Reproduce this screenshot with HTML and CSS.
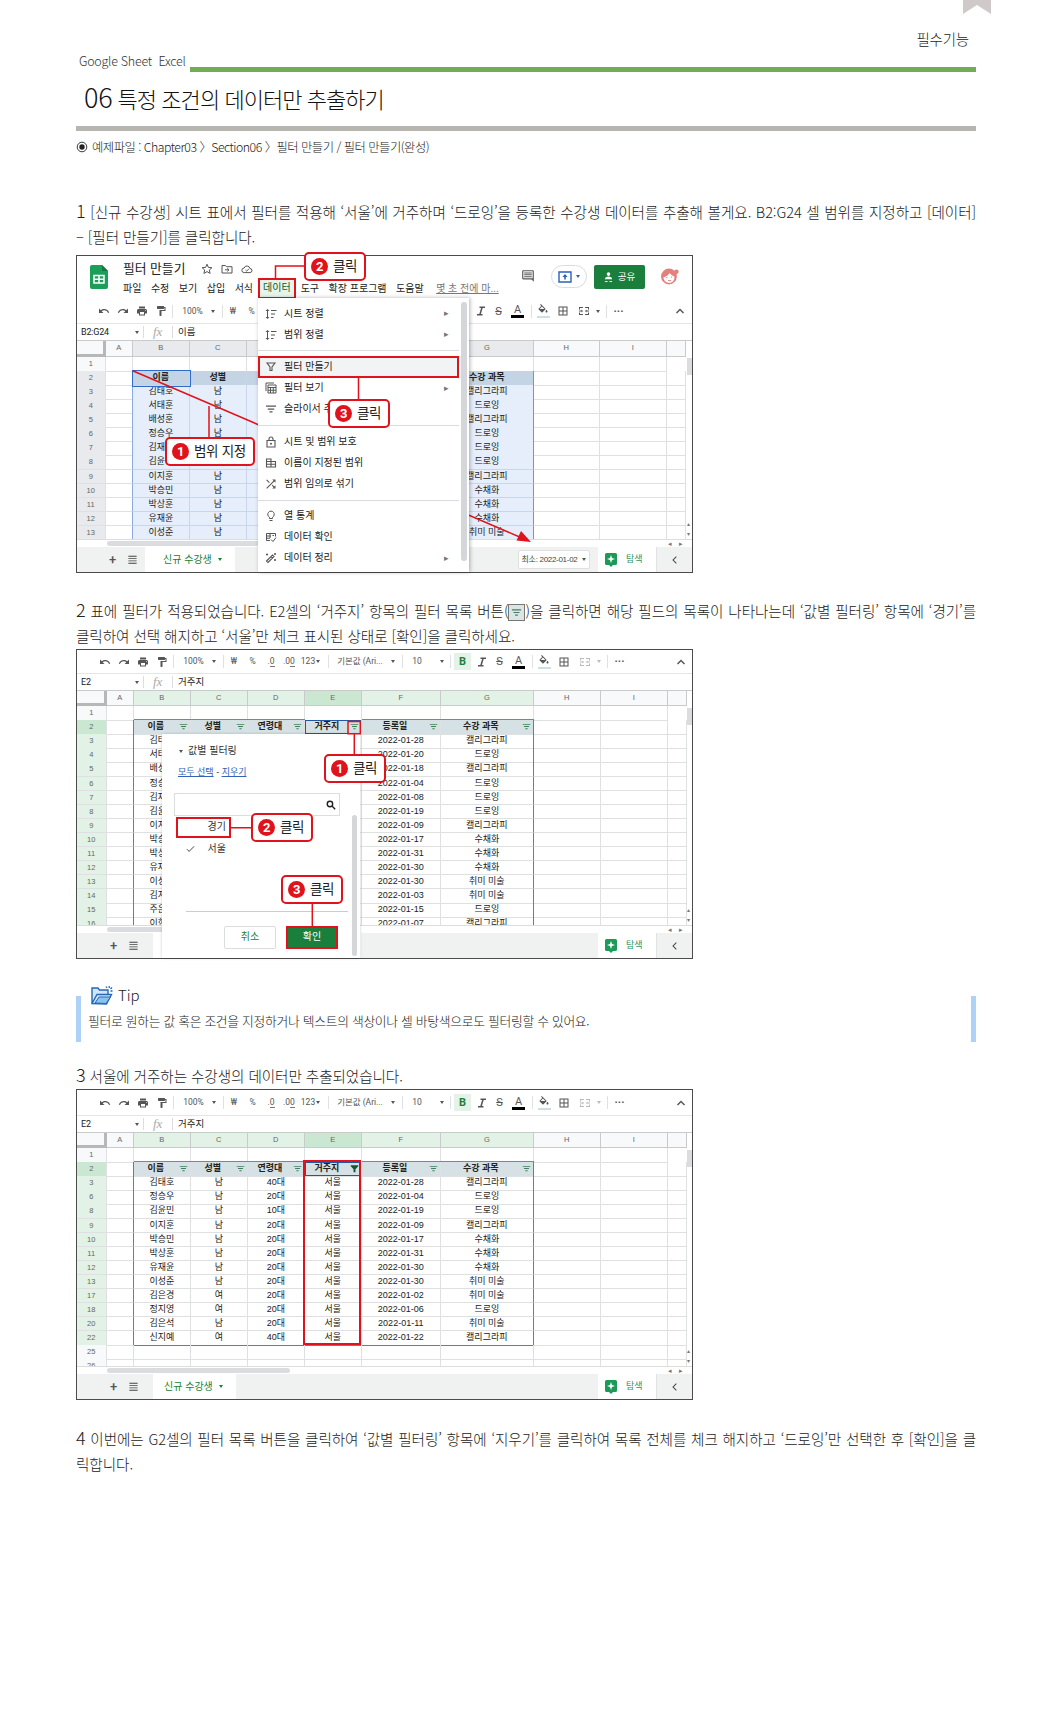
FILE: index.html
```html
<!DOCTYPE html>
<html lang="ko">
<head>
<meta charset="utf-8">
<title>06 특정 조건의 데이터만 추출하기</title>
<link rel="stylesheet" href="styles.css">
</head>
<body>
<svg class="sprite" aria-hidden="true">
  <symbol id="undo" viewBox="0 0 24 24"><path d="M12.5 8c-2.65 0-5.05.99-6.9 2.6L2 7v9h9l-3.62-3.62c1.39-1.16 3.16-1.88 5.12-1.88 3.54 0 6.55 2.31 7.6 5.5l2.37-.78C21.08 11.03 17.15 8 12.5 8z"/></symbol>
  <symbol id="redo" viewBox="0 0 24 24"><path d="M18.4 10.6C16.55 8.99 14.15 8 11.5 8c-4.65 0-8.58 3.03-9.96 7.22L3.9 16c1.05-3.19 4.05-5.5 7.6-5.5 1.95 0 3.73.72 5.12 1.88L13 16h9V7l-3.6 3.6z"/></symbol>
  <symbol id="print" viewBox="0 0 24 24"><path d="M19 8H5c-1.66 0-3 1.34-3 3v6h4v4h12v-4h4v-6c0-1.66-1.34-3-3-3zm-3 11H8v-5h8v5zm3-7c-.55 0-1-.45-1-1s.45-1 1-1 1 .45 1 1-.45 1-1 1zm-1-9H6v4h12V3z"/></symbol>
  <symbol id="paint" viewBox="0 0 24 24"><path d="M18 4V3c0-.55-.45-1-1-1H5c-.55 0-1 .45-1 1v4c0 .55.45 1 1 1h12c.55 0 1-.45 1-1V6h1v4H9v11c0 .55.45 1 1 1h2c.55 0 1-.45 1-1v-9h8V4h-3z"/></symbol>
  <symbol id="italic" viewBox="0 0 24 24"><path d="M9 3v3h3.2l-3.6 12H4v3h11v-3h-3.2l3.6-12H20V3z"/></symbol>
  <symbol id="fill" viewBox="0 0 24 24"><path d="M16.56 8.94L7.62 0 6.21 1.41l2.38 2.38-5.15 5.15c-.59.59-.59 1.54 0 2.12l5.5 5.5c.29.29.68.44 1.06.44s.77-.15 1.06-.44l5.5-5.5c.59-.58.59-1.53 0-2.12zM5.21 10L10 5.21 14.79 10H5.21zM19 11.5s-2 2.17-2 3.5c0 1.1.9 2 2 2s2-.9 2-2c0-1.33-2-3.5-2-3.5z"/></symbol>
  <symbol id="borders" viewBox="0 0 24 24"><path d="M3 3v18h18V3H3zm8 16H5v-6h6v6zm0-8H5V5h6v6zm8 8h-6v-6h6v6zm0-8h-6V5h6v6z"/></symbol>
  <symbol id="merge" viewBox="0 0 24 24"><path d="M2 4h8v2H4v3H2zM22 4h-8v2h6v3h2zM2 20h8v-2H4v-3H2zM22 20h-8v-2h6v-3h2zM2 11h5V9l3 3-3 3v-2H2zM22 11h-5V9l-3 3 3 3v-2h5z"/></symbol>
  <symbol id="up" viewBox="0 0 24 24"><path d="M12 7l-8 8 2 2 6-6 6 6 2-2z"/></symbol>
  <symbol id="left" viewBox="0 0 24 24"><path d="M15.4 6L14 4.600l-7.400 7.400 7.400 7.400 1.400-1.400-6-6z"/></symbol>
  <symbol id="list" viewBox="0 0 24 24"><path d="M3 4h18v2H3zM3 9h18v2H3zM3 14h18v2H3zM3 19h18v2H3z"/></symbol>
  <symbol id="filter" viewBox="0 0 24 24"><path d="M9 19h6v-2.500H9zM2 5v2.500h20V5zM5.500 13.300h13v-2.500h-13z"/></symbol>
  <symbol id="funnel" viewBox="0 0 24 24"><path d="M2 3h20v3l-7.500 8v8h-5v-8L2 6z"/></symbol>
  <symbol id="funnel-o" viewBox="0 0 24 24"><path fill="none" stroke="currentColor" stroke-width="2.200" d="M4 4h16l-6 8v7h-4v-7z"/></symbol>
  <symbol id="sort" viewBox="0 0 24 24"><path d="M5 2L1 6h3v12H1l4 4 4-4H6V6h3zM12 4h11v2H12zM12 11h8v2h-8zM12 18h5v2h-5z"/></symbol>
  <symbol id="views" viewBox="0 0 24 24"><path fill="none" stroke="currentColor" stroke-width="2" d="M2 18V2h16M6 6h16v16H6zM6 11h16M11 11v11M16.500 11v11M6 16.500h16"/></symbol>
  <symbol id="lock" viewBox="0 0 24 24"><path fill="none" stroke="currentColor" stroke-width="2.200" d="M4 9h16v13H4zM8 9V6a4 4 0 018 0v3"/><circle cx="12" cy="15.500" r="2"/></symbol>
  <symbol id="named" viewBox="0 0 24 24"><path fill="none" stroke="currentColor" stroke-width="2.200" d="M3 4h9v16H3zM12 9h9v11h-9zM3 9h9M3 14.500h18"/></symbol>
  <symbol id="shuffle" viewBox="0 0 24 24"><path d="M9.500 8.500L4 3 2.500 4.500 8 10zM14.500 3l2.500 2.500L2.500 20 4 21.500 18.500 7 21 9.500V3zM15 13.500L13.500 15l3.500 3.500-2.500 2.500H21v-6.500L18.500 17z"/></symbol>
  <symbol id="bulb" viewBox="0 0 24 24"><path fill="none" stroke="currentColor" stroke-width="2" d="M9 17v-2.500a6.500 6.500 0 116 0V17zM9 21h6"/></symbol>
  <symbol id="verify" viewBox="0 0 24 24"><path fill="none" stroke="currentColor" stroke-width="2" d="M10 19H3V5h18v6M3 10h9M3 14.500h7M10 5v9M12 17l4 4 6-8M15 9h3"/></symbol>
  <symbol id="wand" viewBox="0 0 24 24"><path fill="none" stroke="currentColor" stroke-width="2.200" d="M3 18L15 6l3 3L6 21zM12 9l3 3M4 3v4M2 5h4M20 14v4M18 16h4M20 2v4M18 4h4"/></symbol>
  <symbol id="search" viewBox="0 0 24 24"><path fill="none" stroke="currentColor" stroke-width="3.400" d="M15 15l7 7M16 9.500a6.500 6.500 0 11-13 0 6.500 6.500 0 0113 0z"/></symbol>
  <symbol id="comment" viewBox="0 0 24 24"><path d="M21.990 4c0-1.100-.89-2-1.990-2H4c-1.100 0-2 .9-2 2v12c0 1.100.9 2 2 2h14l4 4-.01-18zM20 16H4V4h16z"/><path d="M5.500 6h13v1.700h-13zM5.500 9.200h13v1.700h-13zM5.500 12.400h13v1.700h-13z"/></symbol>
  <symbol id="explore" viewBox="0 0 24 28"><path fill="#1e9a58" d="M3 0h18a3 3 0 013 3v18a3 3 0 01-3 3h-5l-4 4-4-4H3a3 3 0 01-3-3V3a3 3 0 013-3z"/><path fill="#fff" d="M12 4l2 6 6 2-6 2-2 6-2-6-6-2 6-2z"/></symbol>
</svg>

<main class="page">
  <header class="head">
    <svg class="bookmark" viewBox="0 0 28 14"><path fill="#cfc9ca" d="M0 0h28v14L14 5 0 14z"/></svg>
    <p class="category">필수기능</p>
    <div class="rule-row"><span class="products">Google Sheet&nbsp; Excel</span><span class="green-rule"></span></div>
    <h1><span>06</span> 특정 조건의 데이터만 추출하기</h1>
    <p class="example"><svg viewBox="0 0 12 12"><circle cx="6" cy="6" r="4.800" fill="none" stroke="#222" stroke-width=".9"/><circle cx="6" cy="6" r="2.700"/></svg><span>예제파일 : Chapter03 〉Section06 〉필터 만들기 / 필터 만들기(완성)</span></p>
  </header>

  <p class="step first"><span class="line full"><b>1</b> [신규 수강생] 시트 표에서 필터를 적용해 ‘서울’에 거주하며 ‘드로잉’을 등록한 수강생 데이터를 추출해 볼게요. B2:G24 셀 범위를 지정하고 [데이터]</span><span class="line">– [필터 만들기]를 클릭합니다.</span></p>

  <section class="shot shot1">
    <div class="app-head">
      <svg class="logo" viewBox="0 0 18 24"><path fill="#1b9e58" d="M2 0h10l6 6v16a2 2 0 01-2 2H2a2 2 0 01-2-2V2a2 2 0 012-2z"/><path fill="#137a43" d="M12 0l6 6h-6z"/><path fill="none" stroke="#fff" stroke-width="1.500" d="M4 10.500h10v7.500H4zM9 10.500V18M4 14.200h10"/></svg>
      <div class="titles">
        <div class="doc"><span>필터 만들기</span>
          <svg viewBox="0 0 12 12"><path class="ln" d="M6 1.200l1.400 3.200 3.500.3-2.600 2.300.8 3.400L6 8.600l-3.100 1.800.8-3.400L1.100 4.700l3.500-.3z"/></svg>
          <svg viewBox="0 0 12 12"><path class="ln" d="M1 2.500h3.500l1 1.200H11V10H1zM4 6.800h4M6.300 5.200L8 6.800 6.300 8.400"/></svg>
          <svg viewBox="0 0 12 12"><path class="ln" d="M3.200 9.600a2.300 2.300 0 01-.1-4.600 3 3 0 015.800.5 2 2 0 010 4.100zM4.500 7l1.200 1.100L7.800 6"/></svg></div>
        <nav class="menubar"><span>파일</span><span>수정</span><span>보기</span><span>삽입</span><span>서식</span><span class="hot">데이터</span><span>도구</span><span>확장 프로그램</span><span>도움말</span><u>몇 초 전에 마...</u></nav>
      </div>
      <svg class="comment"><use href="#comment"/></svg>
      <span class="present"><svg viewBox="0 0 14 12"><path fill="none" stroke="#2a62b8" stroke-width="1.400" d="M1 1h12v10H1z"/><path fill="#2a62b8" d="M7 3l2.600 3H7.800v2.500H6.200V6H4.400z"/></svg><i class="caret"></i></span>
      <span class="share"><svg viewBox="0 0 10 12"><circle cx="5" cy="2.200" r="2" fill="#fff"/><path fill="#fff" d="M1 8c0-4 8-4 8 0z"/><path fill="none" stroke="#fff" d="M1 10.500h3M6 10.500h3"/></svg>공유</span>
      <svg class="avatar" viewBox="0 0 18 18"><circle cx="8.500" cy="9" r="7.500" fill="#e58080"/><circle cx="15.500" cy="4.500" r="2.200" fill="#e58080"/><path fill="#fff" stroke="#d66" stroke-width=".6" d="M2.800 9.500c3-.5 5-2 6.500-4.500.8 2 2.500 3 4.800 3.800C14.500 17.500 3.500 17.500 2.800 9.500z"/><path fill="none" stroke="#c55" stroke-width=".8" d="M6.500 9.500v1M11 9v1M7.500 12.500c1 .8 2 .6 3 0"/></svg>
    </div>
    <div class="toolbar">
      <svg><use href="#undo"/></svg><svg><use href="#redo"/></svg><svg><use href="#print"/></svg><svg><use href="#paint"/></svg><i class="sep"></i><span>100%</span><i class="caret"></i><i class="sep"></i><span>₩</span><span>%</span><span class="dec">.0</span><span class="dec">.00</span><span>123</span><i class="caret"></i><i class="sep"></i><span>기본값 (Ari...</span><i class="caret"></i><i class="sep"></i><span class="size">10</span><i class="caret"></i><i class="sep"></i><span class="bold">B</span><svg><use href="#italic"/></svg><s>S</s><span class="color">A</span><i class="sep"></i><span class="bucket"><svg><use href="#fill"/></svg></span><svg><use href="#borders"/></svg><svg><use href="#merge"/></svg><i class="caret"></i><i class="sep"></i><b>···</b><svg class="end"><use href="#up"/></svg>
    </div>
    <div class="formula"><span class="ref">B2:G24</span><i class="caret"></i><em>fx</em><span>이름</span></div>
    <div class="view">
      <table class="sheet">
        <thead><tr><th><th>A<th>B<th>C<th>D<th>E<th>F<th>G<th>H<th>I<th>
        <tbody>
        <tr><th>1<td><td><td><td><td><td><td><td><td>
        <tr class="hd"><th>2<td><td class="cur">이름<td>성별<td>연령대<td>거주지<td>등록일<td>수강 과목<td><td><td>
        <tr><th>3<td><td>김태호<td>남<td>40대<td>서울<td>2022-01-28<td>캘리그라피<td><td><td>
        <tr><th>4<td><td>서태훈<td>남<td><td><td>2022-01-20<td>드로잉<td><td><td>
        <tr><th>5<td><td>배성훈<td>남<td><td><td>2022-01-18<td>캘리그라피<td><td><td>
        <tr><th>6<td><td>정승우<td>남<td>20대<td>서울<td>2022-01-04<td>드로잉<td><td><td>
        <tr><th>7<td><td>김재훈<td><td><td><td>2022-01-08<td>드로잉<td><td><td>
        <tr><th>8<td><td>김윤민<td>남<td>10대<td>서울<td>2022-01-19<td>드로잉<td><td><td>
        <tr><th>9<td><td>이지훈<td>남<td>20대<td>서울<td>2022-01-09<td>캘리그라피<td><td><td>
        <tr><th>10<td><td>박승민<td>남<td>20대<td>서울<td>2022-01-17<td>수채화<td><td><td>
        <tr><th>11<td><td>박상훈<td>남<td>20대<td>서울<td>2022-01-31<td>수채화<td><td><td>
        <tr><th>12<td><td>유재윤<td>남<td>20대<td>서울<td>2022-01-30<td>수채화<td><td><td>
        <tr><th>13<td><td>이성준<td>남<td>20대<td>서울<td>2022-01-30<td>취미 미술<td><td><td>
      </table>
      <i class="vthumb"></i><span class="varrows">▴<br>▾</span>
    </div>
    <div class="hscroll"><i></i><span>◂</span><span>▸</span></div>
    <footer class="tabs"><b class="plus">+</b><svg><use href="#list"/></svg><span class="tab">신규 수강생<i class="caret"></i></span><span class="min">최소: 2022-01-02<i class="caret"></i></span><span class="explore"><svg><use href="#explore"/></svg>탐색</span><svg class="back"><use href="#left"/></svg></footer>

    <svg class="marks" viewBox="0 0 617 318"><path d="M56.700 115.700L446 283M133 151v33"/><path class="tip-head" d="M455 287l-14.500-1.500 4.500-9.500z"/></svg>
    <div class="menu">
      <p><svg><use href="#sort"/></svg>시트 정렬<i>▸</i></p>
      <p><svg><use href="#sort"/></svg>범위 정렬<i>▸</i></p>
      <hr>
      <p class="picked"><svg><use href="#funnel-o"/></svg>필터 만들기</p>
      <p><svg><use href="#views"/></svg>필터 보기<i>▸</i></p>
      <p><svg><use href="#filter"/></svg>슬라이서 추가</p>
      <hr>
      <p><svg><use href="#lock"/></svg>시트 및 범위 보호</p>
      <p><svg><use href="#named"/></svg>이름이 지정된 범위</p>
      <p><svg><use href="#shuffle"/></svg>범위 임의로 섞기</p>
      <hr>
      <p><svg><use href="#bulb"/></svg>열 통계</p>
      <p><svg><use href="#verify"/></svg>데이터 확인</p>
      <p><svg><use href="#wand"/></svg>데이터 정리<i>▸</i></p>
      <span class="menu-thumb"></span>
    </div>
    <svg class="marks" viewBox="0 0 617 318"><path d="M228 11h-28.500v12.500M282.500 122v22"/></svg>
    <span class="callout s1a"><b>1</b>범위 지정</span>
    <span class="callout s1b"><b>2</b>클릭</span>
    <span class="callout s1c"><b>3</b>클릭</span>
  </section>

  <p class="step second"><span class="line full"><b>2</b> 표에 필터가 적용되었습니다. E2셀의 ‘거주지’ 항목의 필터 목록 버튼(<i class="chip"><svg><use href="#filter"/></svg></i>)을 클릭하면 해당 필드의 목록이 나타나는데 ‘값별 필터링’ 항목에 ‘경기’를</span><span class="line">클릭하여 선택 해지하고 ‘서울’만 체크 표시된 상태로 [확인]을 클릭하세요.</span></p>

  <section class="shot shot2 green">
    <div class="toolbar">
      <svg><use href="#undo"/></svg><svg><use href="#redo"/></svg><svg><use href="#print"/></svg><svg><use href="#paint"/></svg><i class="sep"></i><span>100%</span><i class="caret"></i><i class="sep"></i><span>₩</span><span>%</span><span class="dec">.0</span><span class="dec">.00</span><span>123</span><i class="caret"></i><i class="sep"></i><span>기본값 (Ari...</span><i class="caret"></i><i class="sep"></i><span class="size">10</span><i class="caret"></i><i class="sep"></i><span class="bold">B</span><svg><use href="#italic"/></svg><s>S</s><span class="color">A</span><i class="sep"></i><span class="bucket"><svg><use href="#fill"/></svg></span><svg><use href="#borders"/></svg><svg class="off"><use href="#merge"/></svg><i class="caret off"></i><i class="sep"></i><b>···</b><svg class="end"><use href="#up"/></svg>
    </div>
    <div class="formula"><span class="ref">E2</span><i class="caret"></i><em>fx</em><span>거주지</span></div>
    <div class="view">
      <table class="sheet">
        <thead><tr><th><th>A<th>B<th>C<th>D<th class="on">E<th>F<th>G<th>H<th>I<th>
        <tbody>
        <tr><th>1<td><td><td><td><td><td><td><td><td>
        <tr class="hd"><th class="on">2<td><td>이름<svg><use href="#filter"/></svg><td>성별<svg><use href="#filter"/></svg><td>연령대<svg><use href="#filter"/></svg><td class="cur">거주지<svg><use href="#filter"/></svg><td>등록일<svg><use href="#filter"/></svg><td>수강 과목<svg><use href="#filter"/></svg><td><td><td>
        <tr><th>3<td><td>김태호<td>남<td>40대<td>서울<td>2022-01-28<td>캘리그라피<td><td><td>
        <tr><th>4<td><td>서태훈<td>남<td><td><td>2022-01-20<td>드로잉<td><td><td>
        <tr><th>5<td><td>배성훈<td>남<td><td><td>2022-01-18<td>캘리그라피<td><td><td>
        <tr><th>6<td><td>정승우<td>남<td>20대<td>서울<td>2022-01-04<td>드로잉<td><td><td>
        <tr><th>7<td><td>김재훈<td>남<td><td><td>2022-01-08<td>드로잉<td><td><td>
        <tr><th>8<td><td>김윤민<td>남<td>10대<td>서울<td>2022-01-19<td>드로잉<td><td><td>
        <tr><th>9<td><td>이지훈<td>남<td>20대<td>서울<td>2022-01-09<td>캘리그라피<td><td><td>
        <tr><th>10<td><td>박승민<td>남<td>20대<td>서울<td>2022-01-17<td>수채화<td><td><td>
        <tr><th>11<td><td>박상훈<td>남<td>20대<td>서울<td>2022-01-31<td>수채화<td><td><td>
        <tr><th>12<td><td>유재윤<td>남<td>20대<td>서울<td>2022-01-30<td>수채화<td><td><td>
        <tr><th>13<td><td>이성준<td>남<td>20대<td>서울<td>2022-01-30<td>취미 미술<td><td><td>
        <tr><th>14<td><td>김지훈<td><td><td><td>2022-01-03<td>취미 미술<td><td><td>
        <tr><th>15<td><td>주은영<td><td><td><td>2022-01-15<td>드로잉<td><td><td>
        <tr><th>16<td><td>이현주<td><td><td><td>2022-01-07<td>캘리그라피<td><td><td>
      </table>
      <i class="vthumb"></i><span class="varrows">▴<br>▾</span>
    </div>
    <div class="hscroll"><i></i><span>◂</span><span>▸</span></div>
    <footer class="tabs"><b class="plus">+</b><svg><use href="#list"/></svg><span class="tab wide"></span><span class="explore"><svg><use href="#explore"/></svg>탐색</span><svg class="back"><use href="#left"/></svg></footer>

    <div class="dialog">
      <p class="by-value"><i class="caret"></i>값별 필터링</p>
      <p class="links"><u>모두 선택</u> - <u>지우기</u></p>
      <div class="find"><svg><use href="#search"/></svg></div>
      <p class="option marked">경기</p>
      <p class="option"><svg viewBox="0 0 10 8"><path class="ln" d="M1 4.200l2.500 2.500L9 1"/></svg>서울</p>
      <div class="actions"><span class="cancel">취소</span><span class="ok">확인</span></div>
      <i class="dialog-thumb"></i>
    </div>
    <svg class="marks" viewBox="0 0 617 310"><path d="M272 72.500h12.300v12.300H272zM278.300 85v21M155 178.700h21M236.300 254v23"/></svg>
    <span class="callout s2a"><b>1</b>클릭</span>
    <span class="callout s2b"><b>2</b>클릭</span>
    <span class="callout s2c"><b>3</b>클릭</span>
  </section>

  <aside class="tip">
    <h2><svg viewBox="0 0 22 19"><path fill="#cfe6fb" stroke="#2668b4" stroke-width="1.400" d="M1 17V2h6l1.500 2H17v4M1 17.500L6 8.500h14.500L15.500 18z"/><path fill="#8cc2f2" stroke="#2668b4" stroke-width="1" d="M4 17l4-6h11.500L15 17.500z"/><path fill="none" stroke="#2668b4" stroke-width="1.300" d="M15 .5l1 1.500M18 0l.5 2M21 1.500L19.500 3M21.500 5h-2"/></svg>Tip</h2>
    <p>필터로 원하는 값 혹은 조건을 지정하거나 텍스트의 색상이나 셀 바탕색으로도 필터링할 수 있어요.</p>
  </aside>

  <p class="step third"><span class="line"><b>3</b> 서울에 거주하는 수강생의 데이터만 추출되었습니다.</span></p>

  <section class="shot shot3 green">
    <div class="toolbar">
      <svg><use href="#undo"/></svg><svg><use href="#redo"/></svg><svg><use href="#print"/></svg><svg><use href="#paint"/></svg><i class="sep"></i><span>100%</span><i class="caret"></i><i class="sep"></i><span>₩</span><span>%</span><span class="dec">.0</span><span class="dec">.00</span><span>123</span><i class="caret"></i><i class="sep"></i><span>기본값 (Ari...</span><i class="caret"></i><i class="sep"></i><span class="size">10</span><i class="caret"></i><i class="sep"></i><span class="bold">B</span><svg><use href="#italic"/></svg><s>S</s><span class="color">A</span><i class="sep"></i><span class="bucket"><svg><use href="#fill"/></svg></span><svg><use href="#borders"/></svg><svg class="off"><use href="#merge"/></svg><i class="caret off"></i><i class="sep"></i><b>···</b><svg class="end"><use href="#up"/></svg>
    </div>
    <div class="formula"><span class="ref">E2</span><i class="caret"></i><em>fx</em><span>거주지</span></div>
    <div class="view">
      <table class="sheet">
        <thead><tr><th><th>A<th>B<th>C<th>D<th class="on">E<th>F<th>G<th>H<th>I<th>
        <tbody>
        <tr><th>1<td><td><td><td><td><td><td><td><td>
        <tr class="hd"><th class="on">2<td><td>이름<svg><use href="#filter"/></svg><td>성별<svg><use href="#filter"/></svg><td>연령대<svg><use href="#filter"/></svg><td class="cur">거주지<svg><use href="#funnel"/></svg><td>등록일<svg><use href="#filter"/></svg><td>수강 과목<svg><use href="#filter"/></svg><td><td><td>
        <tr><th>3<td><td>김태호<td>남<td>40대<td>서울<td>2022-01-28<td>캘리그라피<td><td><td>
        <tr><th>6<td><td>정승우<td>남<td>20대<td>서울<td>2022-01-04<td>드로잉<td><td><td>
        <tr><th>8<td><td>김윤민<td>남<td>10대<td>서울<td>2022-01-19<td>드로잉<td><td><td>
        <tr><th>9<td><td>이지훈<td>남<td>20대<td>서울<td>2022-01-09<td>캘리그라피<td><td><td>
        <tr><th>10<td><td>박승민<td>남<td>20대<td>서울<td>2022-01-17<td>수채화<td><td><td>
        <tr><th>11<td><td>박상훈<td>남<td>20대<td>서울<td>2022-01-31<td>수채화<td><td><td>
        <tr><th>12<td><td>유재윤<td>남<td>20대<td>서울<td>2022-01-30<td>수채화<td><td><td>
        <tr><th>13<td><td>이성준<td>남<td>20대<td>서울<td>2022-01-30<td>취미 미술<td><td><td>
        <tr><th>17<td><td>김은경<td>여<td>20대<td>서울<td>2022-01-02<td>취미 미술<td><td><td>
        <tr><th>18<td><td>정지영<td>여<td>20대<td>서울<td>2022-01-06<td>드로잉<td><td><td>
        <tr><th>20<td><td>김은석<td>남<td>20대<td>서울<td>2022-01-11<td>취미 미술<td><td><td>
        <tr class="last"><th>22<td><td>신지예<td>여<td>40대<td>서울<td>2022-01-22<td>캘리그라피<td><td><td>
        <tr class="out"><th>25<td><td><td><td><td><td><td><td><td><td>
        <tr class="out"><th>26<td><td><td><td><td><td><td><td><td><td>
      </table>
      <i class="vthumb"></i><span class="varrows">▴<br>▾</span>
    </div>
    <div class="hscroll"><i></i><span>◂</span><span>▸</span></div>
    <footer class="tabs"><b class="plus">+</b><svg><use href="#list"/></svg><span class="tab">신규 수강생<i class="caret"></i></span><span class="explore"><svg><use href="#explore"/></svg>탐색</span><svg class="back"><use href="#left"/></svg></footer>
    <span class="frame"></span>
  </section>

  <p class="step fourth"><span class="line full"><b>4</b> 이번에는 G2셀의 필터 목록 버튼을 클릭하여 ‘값별 필터링’ 항목에 ‘지우기’를 클릭하여 목록 전체를 체크 해지하고 ‘드로잉’만 선택한 후 [확인]을 클</span><span class="line">릭합니다.</span></p>
</main>
</body>
</html>
```

FILE: styles.css
```css
* { box-sizing: border-box; }
body {
  margin: 0;
  background: #fff;
  color: #222;
  font-family: "Noto Sans CJK KR", sans-serif;
  font-weight: 300;
}
p, h1, h2 { margin: 0; font-weight: inherit; }
svg { display: block; fill: currentColor; flex: none; }
i { font-style: normal; }
.sprite { position: absolute; width: 0; height: 0; }
.ln { fill: none; stroke: currentColor; stroke-width: 1; }
.page { position: relative; width: 900px; height: 1710px; margin-left: 76px; }

/* page heading */
.bookmark { position: absolute; left: 887px; top: 0; width: 28px; height: 14px; }
.category { height: 52px; padding: 28px 7px 0 0; text-align: right; font-size: 14.5px; line-height: 21px; letter-spacing: -.2px; }
.rule-row { display: flex; justify-content: space-between; align-items: flex-end; height: 20px; }
.products { padding-left: 3px; font-size: 12.500px; line-height: 22px; letter-spacing: -.25px; color: #333; white-space: nowrap; }
.green-rule { width: 786px; height: 5px; background: #73ad53; }
h1 { height: 59px; padding: 5px 0 0 8px; border-bottom: 5px solid #b7b6ae; font-size: 22px; line-height: 39px; letter-spacing: -.95px; color: #111; white-space: nowrap; }
h1 span { font-size: 27px; letter-spacing: -.3px; }
.example { display: flex; align-items: center; gap: 4px; height: 31px; margin-bottom: 2px; font-size: 12.300px; letter-spacing: -.5px; white-space: nowrap; }
.example svg { width: 12px; height: 12px; }

/* steps */
.step { font-size: 14.600px; line-height: 25px; letter-spacing: -.08px; white-space: nowrap; }
.step b { font-size: 18px; font-weight: 300; line-height: 20px; }
.line { display: block; height: 25px; }
.full { text-align: justify; text-align-last: justify; }
.first { padding-top: 35px; height: 91px; }
.second { padding-top: 25px; height: 76px; }
.third { height: 26px; }
.fourth { padding-top: 26px; }
.chip { display: inline-block; width: 17px; height: 17px; padding: 2px; border: 1px solid #777; background: #dbe6e4; color: #4a7a66; vertical-align: -4px; }
.chip svg { width: 11px; height: 11px; }

/* captured spreadsheets */
.shot {
  position: relative; display: flex; flex-direction: column;
  width: 617px; border: 1px solid #4c4a4b; background: #fff;
  font: 9px/1 "Liberation Sans", "Noto Sans CJK KR", sans-serif; color: #222;
  --row: 14.070px;
}
.shot1 { height: 318px; }
.shot2 { height: 310px; }
.shot3 { height: 311px; }
.caret { width: 0; height: 0; border: 2.500px solid transparent; border-top: 3px solid #555; border-bottom: 0; }

.app-head { position: relative; display: flex; align-items: flex-start; height: 43px; padding: 9px 12px 0 13px; }
.logo { width: 18px; height: 24px; margin-right: 15px; }
.titles { width: 402px; margin-top: -5px; }
.doc { display: flex; align-items: center; gap: 8px; height: 18px; font-size: 12.800px; white-space: nowrap; }
.doc span { margin-right: 8px; }
.doc svg { width: 12px; height: 12px; color: #555; }
.menubar { display: flex; align-items: center; gap: 9.500px; height: 21px; font-size: 10px; white-space: nowrap; }
.menubar .hot { margin: 0 -5px; padding: 3px 3.500px 4px; border: 2px solid #e0121b; background: #e6f4ea; color: #14562d; }
.menubar u { margin-left: 3px; color: #777; }
.comment { width: 14px; height: 14px; margin: 4px 16px 0 -4px; color: #555; }
.present { display: flex; align-items: center; justify-content: center; gap: 4px; width: 36px; height: 23px; margin-right: 8px; border: 1px solid #dadce0; border-radius: 12px; }
.present svg { width: 14px; height: 12px; }
.present .caret { border-top-color: #2a62b8; }
.share { display: flex; align-items: center; justify-content: center; gap: 5px; width: 51px; height: 24px; margin: 0 15px 0 -1px; border-radius: 2px; background: #1a7f3c; color: #fff; font-size: 9.500px; }
.share svg { width: 9px; height: 11px; }
.avatar { width: 19px; height: 19px; margin-top: 2px; }

.toolbar {
  display: grid; flex: none; align-items: center; justify-items: center; height: 25px;
  grid-template-columns: 18px 19px 19px 19px 5px 35px 6px 12px 10px 27px 10px 26px 12px 7px 14px 50px 16px 3px 32px 12px 4px 21px 17px 19px 19px 8px 16px 24px 17px 11px 7px 17px 63px;
  padding-left: 19px; border-bottom: 1px solid #e3e5e8;
  font-size: 8.500px; color: #555; white-space: nowrap; font-family: Roboto, "Noto Sans CJK KR", sans-serif; font-weight: 400;
}
.toolbar svg { width: 12px; height: 12px; }
.toolbar .sep { width: 1px; height: 13px; background: #dfe1e4; }
.toolbar .size { padding-right: 6px; }
.toolbar .dec { padding-bottom: 1px; background: linear-gradient(#777, #777) right bottom / 5px 1px no-repeat; line-height: 9px; }
.toolbar .bold { width: 17px; height: 17px; background: #e4f2e7; color: #188038; font: bold 11px/17px Roboto, sans-serif; text-align: center; }
.toolbar s { font-size: 11px; }
.toolbar .color { width: 13px; border-bottom: 3px solid #000; font-size: 11px; text-align: center; }
.toolbar .bucket { width: 13px; border-bottom: 2px solid #d0dde4; }
.toolbar b { font-size: 11px; }
.toolbar .end { justify-self: end; width: 12px; margin-right: 4px; }
.toolbar .off { opacity: .4; }
.shot1 .toolbar .bold { background: none; }

.formula { display: flex; align-items: center; flex: none; height: 16px; padding-left: 4px; font-size: 9.500px; }
.formula .ref { width: 54px; font-size: 9px; font-family: Roboto, sans-serif; font-weight: 400; letter-spacing: -.2px; }
.formula em { width: 30px; margin: 0 5px 0 4px; padding-left: 9px; border-left: 1px solid #ddd; border-right: 1px solid #ddd; color: #aaa; font: italic 13px/12px "Liberation Serif", serif; }

.view { position: relative; flex: 1; min-height: 0; overflow: hidden; isolation: isolate; border-top: 1px solid #c8cacc; border-bottom: 1px solid #ddd; }
.sheet, .sheet thead, .sheet tbody { display: block; }
.sheet tr { display: grid; grid-template-columns: 29.500px 27.300px 57px 57px 57px 57px 79px 93px 67px 67px 19px; height: var(--row); }
.sheet thead tr { height: 15.200px; }
.sheet th, .sheet td { position: relative; padding: 0; border-right: 1px solid #dfe0e1; border-bottom: 1px solid #dfe0e1; line-height: 13.500px; text-align: center; white-space: nowrap; font-weight: 400; }
.sheet th { background: #f8f9fa; color: #666; font-size: 7.500px; }
.sheet thead th { line-height: 14px; border-color: #c8cacc; }
.sheet thead th:first-child { border-right: 3px solid #b7b7b7; border-bottom: 3px solid #b7b7b7; }
.sheet .hd td { font-weight: 700; }
.sheet .hd svg { position: absolute; right: 2px; top: 2px; width: 9px; height: 9px; color: #3e7f57; }
.vthumb { position: absolute; right: 0; top: 17px; width: 5px; height: 17px; background: #dadce0; }
.varrows { position: absolute; right: 0; bottom: 0; width: 5px; font-size: 6px; line-height: 10px; color: #777; }

/* blue selection of the first capture */
.shot1 .sheet tr { grid-template-columns: 28.500px 27.300px 57px 57px 57px 57px 80px 93px 66px 67px 19.500px; }
.shot1 .sheet thead tr { height: 16px; }
.shot1 thead th:nth-child(n+3):nth-child(-n+8), .shot1 tbody tr:nth-child(n+2) th { background: #e8eaed; }
.shot1 tbody tr:nth-child(n+2) td:nth-child(n+3):nth-child(-n+8) { background: #e6eefb; border-color: #c9d6ea; }
.shot1 tbody tr.hd:nth-child(n+2) td:nth-child(n+3):nth-child(-n+8) { background: #c3d4e4; }
.shot1 tbody tr:nth-child(n+2) td:nth-child(8):nth-child(-n+8) { border-right-color: #6d97dd; }
.shot1 tbody tr:nth-child(n+2) td:nth-child(2) { border-right-color: #8aaae0; }
.shot1 .cur { box-shadow: 0 0 0 1px #2f6bc8; z-index: 1; }

/* filtered ranges */
.green thead th:nth-child(n+3):nth-child(-n+8), .green tbody tr:nth-child(n+2) th { background: #e3f2e7; }
.green thead th.on:nth-child(6), .green tbody tr.hd th.on { background: #cae7d2; }
.green .hd td:nth-child(n+3):nth-child(-n+8) { background: #d5e1e4; box-shadow: 0 -1px #5b9c70; padding-right: 12px; }
.green tbody tr:nth-child(n+2) td:nth-child(2), .green tbody tr:nth-child(n+2) td:nth-child(8) { border-right: 1px solid #4f9463; }
.green .last td:nth-child(n+3):nth-child(-n+8) { border-bottom: 1px solid #4f9463; }
.green tbody tr.out th:first-child { background: #f8f9fa; }
.green tbody tr.out:nth-child(n+2) td:nth-child(n) { border-right-color: #dfe0e1; }
.green .hd td.cur:nth-child(6) { box-shadow: inset 0 0 0 1px #2456a8; }
.shot3 .hd td.cur svg { color: #14562d; }

.hscroll { display: flex; align-items: center; flex: none; gap: 5px; height: 7px; padding-left: 30px; padding-right: 8px; color: #777; font-size: 7px; }
.hscroll i { width: 183px; height: 5px; margin-right: auto; border-radius: 3px; background: #dadce0; }
.hscroll span { width: 6px; text-align: center; }
.tabs { display: flex; align-items: center; flex: none; height: 25px; padding-left: 33px; background: #f0f1f1; font-size: 10px; color: #444; }
.tabs .plus { width: 8px; margin-right: 10px; font: 500 13px/1 Roboto, sans-serif; color: #555; }
.tabs svg { width: 11px; height: 11px; }
.tabs .tab { display: flex; align-items: center; gap: 6px; width: 83px; height: 25px; margin-left: 14px; padding-left: 11px; background: #fff; color: #188038; }
.tabs .tab .caret { border-top-color: #188038; }
.tabs .wide { width: 208px; }
.tabs .explore { display: flex; align-items: center; gap: 9px; width: 59px; height: 25px; margin-left: auto; padding-left: 7px; border-right: 1px solid #e2e2e2; background: #fff; color: #2f9560; font-size: 9px; }
.tabs .explore svg { width: 12px; height: 14px; }
.tabs .back { width: 12px; height: 12px; margin: 0 11px 0 12px; }
.shot1 .tabs .tab { width: 90px; margin-left: 7px; padding-left: 18px; }
.shot1 .tabs .plus { margin-left: -1px; }
.shot1 .min { display: flex; align-items: center; justify-content: center; gap: 5px; width: 72px; height: 19px; margin-left: auto; border: 1px solid #e0e0e0; border-radius: 2px; background: #fff; font-size: 8px; letter-spacing: -.3px; white-space: nowrap; }
.shot1 .min + .explore { margin-left: 8px; }
.shot2 .toolbar { height: 24px; }
.shot3 .toolbar { height: 26px; }
.shot1 .toolbar { padding-left: 18px; }

/* data menu */
.menu { position: absolute; left: 181px; top: 42px; width: 211px; height: 274px; padding: 5px 10px 0 0; background: #fff; box-shadow: 1px 0 4px rgba(0,0,0,.3); overflow: hidden; }
.menu p { display: flex; align-items: center; height: 21.200px; padding: 0 10px 0 7px; gap: 7px; font-size: 10px; white-space: nowrap; }
.menu svg { width: 12px; height: 12px; color: #555; }
.menu i { margin-left: auto; color: #777; font-size: 9px; }
.menu hr { height: 1px; margin: 5px 0; border: 0; background: #d9dce3; }
.menu .picked { border: 2px solid #e0121b; background: #f1f3f4; padding-left: 5px; }
.menu-thumb { position: absolute; right: 2px; top: 4px; width: 6px; height: 259px; border-radius: 3px; background: #d4d6da; }

/* filter dialog */
.dialog { position: absolute; left: 85px; top: 84px; width: 198px; height: 224px; padding: 8px 20px 0 12px; background: #fff; box-shadow: 0 0 3px rgba(0,0,0,.2); font-size: 10px; color: #333; }
.by-value { display: flex; align-items: center; gap: 5px; height: 18px; padding-left: 5px; }
.links { height: 24px; padding-left: 4px; font-size: 9px; line-height: 24px; }
.links u { color: #3460b5; }
.find { display: flex; align-items: center; justify-content: flex-end; height: 23px; margin-top: 9px; padding-right: 3px; border: 1px solid #ddd; color: #222; }
.find svg { width: 10px; height: 10px; }
.option { display: flex; align-items: center; gap: 13px; width: 55px; height: 20.500px; margin: 1px 0 0 2px; padding-right: 5px; justify-content: flex-end; }
.option svg { width: 9px; height: 8px; }
.marked { border: 2px solid #e0121b; padding-right: 3px; }
.actions { display: flex; gap: 10px; margin: 52px -8px 0 12px; padding: 14px 0 0 38px; border-top: 1px solid #ccc; }
.actions span { width: 52px; height: 23px; border: 1px solid #dadce0; border-radius: 2px; line-height: 20px; text-align: center; color: #188038; }
.actions .ok { border: 2px solid #e0121b; background: #1a7f3c; color: #fff; line-height: 18px; border-radius: 0; }
.dialog-thumb { position: absolute; right: 3px; top: 81px; width: 5px; height: 141px; border-radius: 3px; background: #d4d6da; }

/* red annotations */
.marks { position: absolute; left: -1px; top: -1px; width: 617px; height: calc(100% + 2px); overflow: visible; fill: none; stroke: #e0121b; stroke-width: 1.500; }
.marks .tip-head { fill: #e0121b; stroke: none; }
.callout { position: absolute; display: flex; align-items: center; gap: 5px; width: 62px; height: 29px; padding: 0 0 0 5px; border: 2px solid #e0121b; border-radius: 5px; background: #fff; font-size: 13.500px; letter-spacing: -.3px; white-space: nowrap; }
.callout b { width: 17px; height: 17px; border-radius: 50%; background: #e0121b; color: #fff; font: 700 13px/17px Roboto, sans-serif; text-align: center; }
.s1a { left: 88px; top: 181px; width: 90px; }
.s1b { left: 227px; top: -4px; }
.s1c { left: 251px; top: 143px; }
.s2a { left: 247px; top: 104px; }
.s2b { left: 174px; top: 163px; }
.s2c { left: 204px; top: 225px; }
.frame { position: absolute; left: 226px; top: 70px; width: 58px; height: 185px; border: 2px solid #e0121b; }

/* tip */
.tip { display: flex; flex-direction: column; height: 46px; margin: 37px 0 21px; border-left: 5px solid #aed1f8; border-right: 5px solid #aed1f8; }
.tip h2 { display: flex; align-items: center; gap: 5px; flex: none; height: 22px; margin-top: -12px; padding-left: 10px; font-size: 15px; line-height: 22px; }
.tip h2 svg { width: 22px; height: 19px; }
.tip p { margin-top: 3px; padding-left: 7px; font-size: 12.800px; line-height: 24px; letter-spacing: -.3px; white-space: nowrap; }
```
